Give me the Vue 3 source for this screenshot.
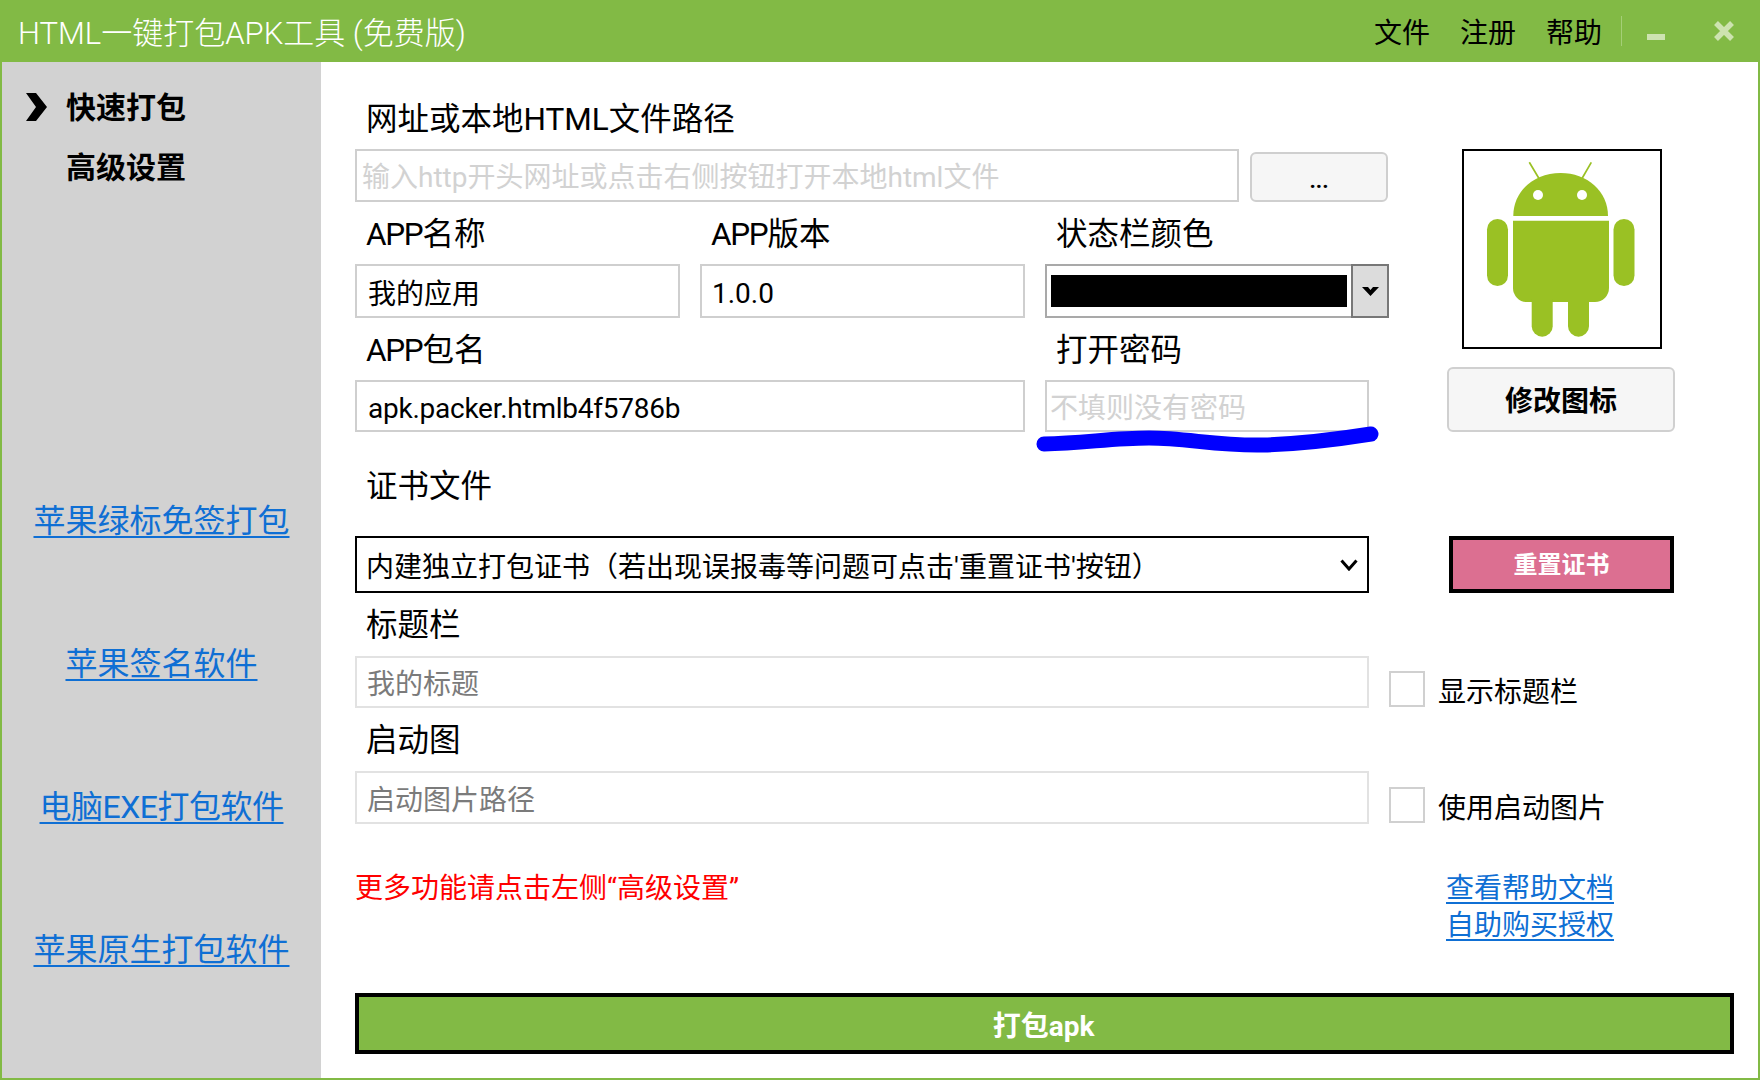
<script setup>
const links = ['苹果绿标免签打包', '苹果签名软件', '电脑EXE打包软件', '苹果原生打包软件']
</script>

<template>
  <div class="window">
    <header class="titlebar">
      <div class="title">HTML一键打包APK工具 (免费版)</div>
      <nav class="menu">
        <span>文件</span><span>注册</span><span>帮助</span>
      </nav>
      <i class="divider"></i>
      <svg class="win-min" width="18" height="6" viewBox="0 0 18 6"><rect width="18" height="6" fill="#cde3b0" /></svg>
      <svg class="win-close" width="22" height="20" viewBox="0 0 22 20"><path d="M3 2 L19 18 M19 2 L3 18" stroke="#cde3b0" stroke-width="5.5" fill="none" /></svg>
    </header>

    <div class="body">
      <aside class="sidebar">
        <div class="nav-item active">
          <svg class="chevron" width="21" height="28" viewBox="0 0 21 28"><path d="M0 0 H10 L21 14 L10 28 H0 L10 14 Z" fill="#000" /></svg>
          <span>快速打包</span>
        </div>
        <div class="nav-item second"><span>高级设置</span></div>
        <div class="side-links">
          <a v-for="l in links" :key="l" class="link side-link" :class="{ tight: l.includes('EXE') }">{{ l }}</a>
        </div>
      </aside>

      <main class="main">
        <div class="upper">
          <div class="upper-left">
            <div class="label">网址或本地HTML文件路径</div>
            <div class="url-row">
              <input class="input url light" placeholder="输入http开头网址或点击右侧按钮打开本地html文件" />
              <button class="dots">...</button>
            </div>
            <div class="tri">
              <div>
                <div class="label"><span class="lat">APP</span>名称</div>
                <input class="input h54 cjk" value="我的应用" />
              </div>
              <div>
                <div class="label"><span class="lat">APP</span>版本</div>
                <input class="input h54" value="1.0.0" />
              </div>
              <div>
                <div class="label">状态栏颜色</div>
                <div class="combo">
                  <div class="combo-value"><i class="swatch"></i></div>
                  <div class="combo-btn">
                    <svg width="17" height="9" viewBox="0 0 17 9"><path d="M0 0 H6 L8.5 3 L11 0 H17 L8.5 9 Z" fill="#000" /></svg>
                  </div>
                </div>
              </div>
            </div>
            <div class="duo">
              <div>
                <div class="label"><span class="lat">APP</span>包名</div>
                <input class="input h52 pkg" value="apk.packer.htmlb4f5786b" />
              </div>
              <div class="pwd">
                <div class="label">打开密码</div>
                <input class="input h52 light pwd-input" placeholder="不填则没有密码" />
                <svg class="scribble" width="346" height="30" viewBox="0 0 346 30"><path d="M9 18 C 50 17, 78 12, 114 12 C 152 12, 182 20, 228 19 C 262 18, 292 15, 336 8" stroke="#0000ff" stroke-width="15" stroke-linecap="round" fill="none" /></svg>
              </div>
            </div>
          </div>

          <div class="upper-right">
            <div class="icon-box">
              <svg width="196" height="196" viewBox="2 2 196 196">
                <g fill="#9ac124">
                  <path d="M51.3 67 C51.3 42 72 24 98.7 24 C125 24 146 42 146 67 Z" />
                  <path d="M51 71.7 H147 V139 A14 14 0 0 1 133 153 H65 A14 14 0 0 1 51 139 Z" />
                  <rect x="25" y="70" width="21" height="67" rx="10.5" />
                  <rect x="151.5" y="70" width="21" height="67" rx="10.5" />
                  <path d="M69.7 150 H90.7 V177.2 A10.5 10.5 0 0 1 69.7 177.2 Z" />
                  <path d="M106 150 H127 V177.2 A10.5 10.5 0 0 1 106 177.2 Z" />
                </g>
                <circle cx="76" cy="46" r="5" fill="#fff" />
                <circle cx="120" cy="46" r="5" fill="#fff" />
                <path d="M67.3 13.3 L77 29.5 M129.3 13.3 L120 29.5" stroke="#9ac124" stroke-width="1.7" fill="none" />
              </svg>
            </div>
            <button class="change-icon">修改图标</button>
          </div>
        </div>

        <div class="label cert-label">证书文件</div>
        <div class="cert-row">
          <div class="select">
            <span>内建独立打包证书（若出现误报毒等问题可点击'重置证书'按钮）</span>
            <svg width="18" height="12" viewBox="0 0 18 12"><path d="M1.5 1.5 L9 10 L16.5 1.5" stroke="#000" stroke-width="3" fill="none" /></svg>
          </div>
          <button class="reset">重置证书</button>
        </div>

        <div class="check-row">
          <div class="grow">
            <div class="label tall">标题栏</div>
            <input class="input h52 soft" placeholder="我的标题" />
          </div>
          <label class="check"><i class="box"></i><span>显示标题栏</span></label>
        </div>
        <div class="check-row">
          <div class="grow">
            <div class="label tall">启动图</div>
            <input class="input h53 soft" placeholder="启动图片路径" />
          </div>
          <label class="check"><i class="box"></i><span>使用启动图片</span></label>
        </div>

        <div class="note-row">
          <div class="note">更多功能请点击左侧“高级设置”</div>
          <div class="help">
            <a class="link">查看帮助文档</a>
            <a class="link">自助购买授权</a>
          </div>
        </div>

        <button class="build">打包apk</button>
      </main>
    </div>
  </div>
</template>

<style scoped>
.window {
  width: 1760px;
  height: 1080px;
  box-sizing: border-box;
  display: flex;
  flex-direction: column;
  border: 2px solid #82ba45;
  border-top: 0;
  background: #fff;
  overflow: hidden;
  font-family: Roboto, "Noto Sans CJK SC", sans-serif;
  color: #000;
}
.titlebar {
  height: 62px;
  flex: none;
  margin: 0 -2px;
  background: #82ba45;
  display: flex;
  align-items: center;
}
.title {
  margin-left: 18px;
  font-size: 31px;
  font-weight: 300;
  color: #fff;
  flex: 1;
  padding-bottom: 2px;
}
.menu {
  display: flex;
  gap: 30px;
  font-size: 28px;
}
.divider {
  width: 1px;
  height: 30px;
  margin-left: 19px;
  background: #a5cf77;
}
.win-min {
  margin: 11px 0 0 25px;
}
.win-close {
  margin: 0 25px 0 48px;
}
.body {
  flex: 1;
  display: flex;
  min-height: 0;
}
.sidebar {
  width: 319px;
  flex: none;
  background: #d2d2d2;
  padding-top: 15px;
  box-sizing: border-box;
  display: flex;
  flex-direction: column;
}
.nav-item {
  height: 60px;
  display: flex;
  align-items: center;
  gap: 19px;
  padding-left: 24px;
  font-size: 30px;
  font-weight: 700;
}
.nav-item span {
  padding-bottom: 4px;
}
.nav-item.second {
  padding-left: 64px;
}
.side-links {
  margin-top: 299px;
  display: flex;
  flex-direction: column;
  align-items: center;
  gap: 93px;
}
.side-link {
  height: 50px;
  line-height: 50px;
  font-size: 32px;
}
.side-link.tight {
  letter-spacing: -0.5px;
}
.link {
  color: #0f6fd4;
  text-decoration: underline;
  text-underline-offset: 4px;
  text-decoration-thickness: 2px;
}
.main {
  flex: 1;
  min-width: 0;
  padding: 25px 24px 0 34px;
  box-sizing: border-box;
}
.label {
  height: 62px;
  line-height: 66px;
  margin-left: 11px;
  font-size: 31.5px;
  white-space: nowrap;
}
.label.tall {
  height: 63px;
}
.lat {
  letter-spacing: -1.3px;
}
.upper {
  display: flex;
}
.upper-left {
  width: 1034px;
  flex: none;
}
.upper-right {
  margin: 62px 0 0 58px;
  width: 228px;
  display: flex;
  flex-direction: column;
  align-items: center;
}
.input {
  display: block;
  width: 100%;
  box-sizing: border-box;
  border: 2px solid #cfcfcf;
  border-radius: 0;
  outline: none;
  padding: 4px 10px 0;
  margin: 0;
  font: inherit;
  font-size: 28px;
  color: #000;
  background: #fff;
}
.input.pkg {
  letter-spacing: -0.25px;
  padding-left: 11px;
}
.input::placeholder {
  color: #7b7b7b;
  opacity: 1;
}
.input.light {
  padding: 4px 5px 0;
}
.input.light::placeholder {
  color: #d2d2d2;
}
.input.pwd-input {
  padding-left: 3px;
}
.input.soft {
  border-color: #e2e2e2;
}
.h52 { height: 52px; }
.h53 { height: 53px; padding-top: 6px; }
.h54 { height: 54px; padding-top: 5px; }
.input.cjk {
  padding: 1px 10px 0 11px;
}
.url-row {
  display: flex;
  gap: 11px;
  height: 53px;
  margin-right: 1px;
}
.url {
  flex: 1;
  min-width: 0;
  width: auto;
  height: 53px;
}
.dots {
  width: 138px;
  height: 50px;
  align-self: flex-end;
  box-sizing: border-box;
  border: 2px solid #cfcfcf;
  border-radius: 6px;
  background: #f6f6f6;
  font: inherit;
  font-size: 22px;
  font-weight: 700;
  color: #000;
  padding: 6px 0 0;
}
.tri {
  display: grid;
  grid-template-columns: 325px 325px 344px;
  column-gap: 20px;
}
.combo {
  height: 54px;
  box-sizing: border-box;
  display: flex;
  border: 2px solid #a9a9a9;
}
.combo-value {
  flex: 1;
  display: flex;
  align-items: center;
  padding: 0 4px 0 4px;
}
.swatch {
  display: block;
  width: 100%;
  height: 32px;
  background: #000;
}
.combo-btn {
  width: 38px;
  margin: -2px -2px -2px 0;
  box-sizing: border-box;
  border: 2px solid #777;
  background: #dcdcdc;
  display: flex;
  align-items: center;
  justify-content: center;
}
.duo {
  display: grid;
  grid-template-columns: 670px 324px;
  column-gap: 20px;
}
.pwd {
  position: relative;
}
.scribble {
  position: absolute;
  left: -10px;
  top: 108px;
}
.icon-box {
  width: 200px;
  height: 200px;
  box-sizing: border-box;
  border: 2px solid #000;
  flex: none;
  margin-left: 2px;
}
.icon-box svg {
  display: block;
}
.change-icon {
  margin-top: 18px;
  width: 228px;
  height: 65px;
  box-sizing: border-box;
  border: 2px solid #d0d0d0;
  border-radius: 6px;
  background: #f6f6f6;
  font: inherit;
  font-size: 28px;
  font-weight: 700;
  color: #000;
  padding: 0 0 2px;
}
.cert-label {
  margin-top: 22px;
  margin-bottom: 20px;
}
.cert-row {
  display: flex;
  gap: 80px;
}
.select {
  width: 1014px;
  height: 57px;
  box-sizing: border-box;
  border: 2px solid #000;
  padding: 0 9px;
  display: flex;
  align-items: center;
  justify-content: space-between;
  font-size: 28px;
  white-space: nowrap;
}
.reset {
  width: 225px;
  height: 57px;
  box-sizing: border-box;
  border: 4px solid #000;
  background: #dc6f91;
  color: #fff;
  font: inherit;
  font-size: 24px;
  font-weight: 700;
  padding: 0 0 4px;
}
.check-row {
  display: flex;
  align-items: flex-end;
  gap: 20px;
}
.grow {
  width: 1014px;
  flex: none;
}
.check {
  display: flex;
  align-items: flex-start;
  gap: 13px;
  font-size: 28px;
  height: 36px;
  line-height: 36px;
  margin-bottom: 1px;
  white-space: nowrap;
}
.check span {
  line-height: 44px;
}
.box {
  width: 36px;
  height: 36px;
  box-sizing: border-box;
  border: 2px solid #d0d0d0;
  flex: none;
}
.note-row {
  display: grid;
  grid-template-columns: 1091px 1fr;
  padding-top: 46px;
  font-size: 28px;
  line-height: 37px;
}
.note {
  color: #ff0000;
}
.help {
  display: flex;
  flex-direction: column;
  align-items: flex-start;
}
.build {
  display: block;
  width: 100%;
  margin-top: 49px;
  height: 61px;
  box-sizing: border-box;
  border: 4px solid #000;
  background: #82ba45;
  color: #fff;
  font: inherit;
  font-size: 28px;
  font-weight: 700;
  padding: 0 2px 0 0;
}
</style>
